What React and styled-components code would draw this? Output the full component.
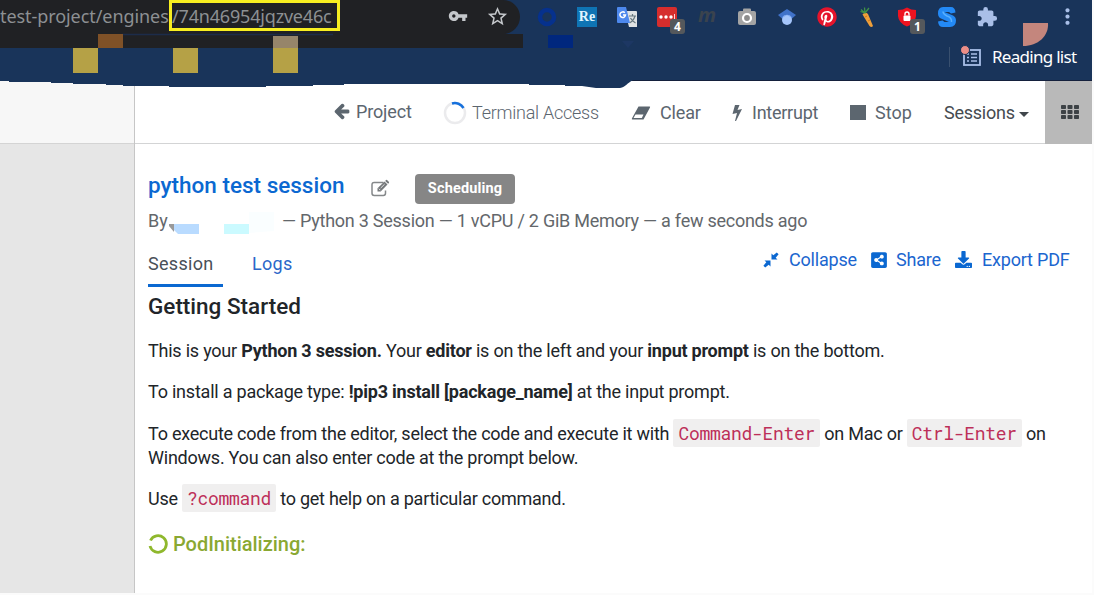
import React from "react";
import styled, { createGlobalStyle } from "styled-components";
import { FaShareAltSquare, FaDownload, FaPinterest } from "react-icons/fa";
import { MdVpnKey, MdStarBorder, MdExtension, MdMoreVert } from "react-icons/md";

const Global = createGlobalStyle`
  * { box-sizing: border-box; }
  html, body { margin: 0; padding: 0; background: #fbfbfb; overflow: hidden; }
  body { font-family: Roboto, "Liberation Sans", sans-serif; font-size: 18px; color: #212529; }
  svg { display: block; flex: none; }
`;

const Window = styled.div`
  width: 1092px;
  height: 593px;
  display: flex;
  flex-direction: column;
  background: #fff;
`;

const Chrome = styled.header`
  position: relative;
  height: 81px;
  flex: none;
  background: #19345a;
  border-bottom: 1px solid #14203c;
`;

const AddressRow = styled.div`
  display: flex;
  height: 34px;
  align-items: flex-start;
`;

const AddressBar = styled.div`
  width: 520px;
  height: 34px;
  margin-right: 7px;
  display: flex;
  background: #202124;
  border-top-right-radius: 17px;
  border-bottom-right-radius: 17px;
  color: #c4c7cb;
`;

const KeyIcon = styled(MdVpnKey)`
  margin-top: 6px;
`;

const StarIcon = styled(MdStarBorder)`
  margin: 5px 0 0 18px;
`;

const Url = styled.div`
  position: relative;
  z-index: 1;
  width: 448px;
  height: 34px;
  display: flex;
  color: #8d9093;
  font: 18px/32px "Noto Sans", "Open Sans", sans-serif;
  white-space: nowrap;
`;

const UrlBase = styled.span`
  width: 169px;
  letter-spacing: -0.07px;
`;

const UrlMark = styled.span`
  width: 171px;
  height: 31px;
  line-height: 26px;
  border: 3px solid #f7ee20;
  letter-spacing: -0.18px;
`;

const Extension = styled.span`
  position: relative;
  width: 40px;
  height: 34px;
  display: flex;
  align-items: center;
  justify-content: center;
  padding-bottom: 1px;
  color: ${(p) => p.$color || "#a9bfe8"};
`;

const Badge = styled.span`
  position: absolute;
  left: 23px;
  top: 19px;
  width: 15px;
  height: 15px;
  border-radius: 3px;
  background: #54585c;
  color: #fff;
  font: bold 12px/15px "Open Sans", sans-serif;
  text-align: center;
`;

const ReTile = styled.span`
  width: 20px;
  height: 20px;
  background: #0f74b4;
  color: #dff5ff;
  font: bold 14px/20px "Liberation Serif", serif;
  text-align: center;
`;

const MLetter = styled.span`
  color: #3a434e;
  font: italic bold 20px/28px "Open Sans", sans-serif;
  padding-bottom: 3px;
`;

const MenuButton = styled.span`
  margin-left: 48px;
  margin-top: 4px;
  color: #a9bfe8;
`;

const ChromeArt = styled.svg`
  position: absolute;
  left: 0;
  top: 0;
  pointer-events: none;
`;

const BookmarkRow = styled.div`
  display: flex;
  align-items: center;
  justify-content: flex-end;
  height: 44px;
  padding: 0 16px 1px 0;
  color: #fff;
  font: 17px/24px "Noto Sans", "Open Sans", sans-serif;
`;

const ReadingList = styled.div`
  display: flex;
  align-items: center;
  width: 127px;
  height: 20px;
  margin-top: 3px;
  border-left: 1px solid #39506f;
  white-space: nowrap;
  svg { margin: -3px 0 0 11px; }
  span { margin-left: 9px; letter-spacing: -0.72px; }
`;

const Body = styled.div`
  display: flex;
  flex: 1;
  min-height: 0;
`;

const Sidebar = styled.aside`
  width: 135px;
  flex: none;
  background: #e6e6e6;
  border-right: 1px solid #c6c6c6;
`;

const SidebarTop = styled.div`
  height: 63px;
  background: #f7f7f7;
  border-bottom: 1px solid #d4d4d4;
`;

const Main = styled.main`
  width: 957px;
  display: flex;
  flex-direction: column;
`;

const Toolbar = styled.nav`
  display: grid;
  grid-template-columns: 109px 188px 100px 118px 95px 101px 47px;
  padding-left: 199px;
  height: 63px;
  flex: none;
  border-bottom: 1px solid #d3d4d5;
  color: #5c666f;
`;

const Tool = styled.div`
  display: flex;
  align-items: center;
  height: 63px;
  padding-bottom: ${(p) => p.$lift || 0}px;
  white-space: nowrap;
  font-weight: ${(p) => p.$weight || 400};
  color: ${(p) => p.$color || "inherit"};
  span { margin-left: ${(p) => p.$gap || 0}px; letter-spacing: ${(p) => p.$track || 0}px; }
`;

const Caret = styled.i`
  margin: 4px 0 0 4px;
  border: 5px solid transparent;
  border-top-color: #40464b;
  border-bottom: 0;
`;

const Apps = styled.div`
  height: 63px;
  display: flex;
  align-items: center;
  justify-content: center;
  padding: 0 0 1px 3px;
  background: #b9b9b9;
`;

const Content = styled.section`
  padding: 28px 24px 0 13px;
`;

const TitleRow = styled.div`
  display: flex;
  height: 34px;
  align-items: center;
  svg { margin-bottom: 3px; }
`;

const Title = styled.h1`
  width: 223px;
  margin: 0;
  font-size: 22.5px;
  line-height: 28px;
  font-weight: 500;
  color: #0b68d1;
  padding-bottom: 8px;
  white-space: nowrap;
`;

const Status = styled.span`
  width: 100px;
  height: 30px;
  margin-left: 25px;
  border-radius: 4px;
  background: #868686;
  color: #fff;
  font-size: 14.5px;
  font-weight: 700;
  line-height: 29px;
  text-align: center;
  letter-spacing: 0.15px;
`;

const Byline = styled.div`
  display: flex;
  height: 30px;
  line-height: 30px;
  color: #63676b;
  white-space: nowrap;
  svg { margin-top: 3px; }
`;

const By = styled.span`
  width: 21px;
`;

const Meta = styled.span`
  letter-spacing: -0.25px;
`;

const TabRow = styled.div`
  display: flex;
  justify-content: space-between;
  height: 51px;
  padding-top: 13px;
`;

const Tabs = styled.div`
  display: flex;
  gap: 29px;
`;

const Tab = styled.a`
  height: 38px;
  width: 75px;
  line-height: 30px;
  letter-spacing: 0.3px;
  color: ${(p) => (p.$active ? "#495057" : "#2a67c9")};
  border-bottom: 3px solid ${(p) => (p.$active ? "#0b68d1" : "transparent")};
`;

const Actions = styled.div`
  display: grid;
  grid-template-columns: 107px 85px 113px;
  height: 21px;
`;

const Action = styled.a`
  display: flex;
  align-items: center;
  color: #1b66cf;
  white-space: nowrap;
  svg { color: #0b68d1; }
  span { margin-left: ${(p) => p.$gap}px; letter-spacing: -0.2px; }
`;

const Heading = styled.h2`
  margin: 5px 0 19px;
  font-size: 22.5px;
  line-height: 28px;
  font-weight: 500;
  color: #212529;
`;

const Text = styled.p`
  margin: 0 0 17.3px;
  line-height: 24px;
  white-space: nowrap;
  letter-spacing: ${(p) => p.$track || -0.25}px;
  b { font-weight: 700; }
`;

const Code = styled.code`
  display: inline-block;
  padding: 2px 5px;
  margin: -4px 0;
  border-radius: 2px;
  background: #f0efef;
  color: #bd2f59;
  font: 18px/24px "Roboto Mono", "DejaVu Sans Mono", monospace;
  letter-spacing: -0.3px;
`;

const Pod = styled.div`
  display: flex;
  align-items: center;
  height: 28px;
  margin-top: 19px;
  color: #8aa832;
  font-size: 20px;
  font-weight: 500;
  span { margin-left: 5px; letter-spacing: -0.02px; }
`;

const PixelArt = () => (
  <ChromeArt width="1092" height="90" viewBox="0 0 1092 90">
    <rect y="34" width="523" height="14" fill="#202124" />
    <path d="M0 28H510L505 34H0Z" fill="#202124" />
    <path d="M122 34.5H333" stroke="#1c2c4a" strokeWidth="1.5" />
    <rect x="98" y="34" width="25" height="14" fill="#7f5127" />
    <rect x="73" y="48" width="25" height="25" fill="#b5a146" />
    <rect x="173" y="48" width="25" height="25" fill="#b5a146" />
    <rect x="273" y="36" width="25" height="12" fill="#96856a" />
    <rect x="273" y="48" width="25" height="25" fill="#b5a146" />
    <rect x="548" y="35" width="25" height="13" fill="#00277e" />
    <path d="M622 41L634 41L628 48Z" fill="#1d3763" />
    <path d="M1023 23H1048C1049 36 1038 46 1023 46Z" fill="#c4867d" />
    <path d="M0 80H633C627 83 626 87 620 88H596L582 86H565V85H529V84H344V85H313V86H266V87H169V86H123V85H106V84H73V83H51V82H9V81H0Z" fill="#19345a" />
  </ChromeArt>
);

const ArrowLeft = () => (
  <svg width="16" height="17" viewBox="0 130 1600 1660" fill="#5c666f">
    <path d="M1536 896v128q0 53-32.5 90.5T1419 1152H715l293 294q38 36 38 90t-38 90l-75 76q-37 37-90 37-52 0-91-37L101 1050Q64 1013 64 960q0-52 37-91l651-650q38-38 91-38 52 0 90 38l75 74q38 38 38 91t-38 91L715 768h704q52 0 84.5 37.5T1536 896z" />
  </svg>
);

const EditIcon = () => (
  <svg width="19" height="18" viewBox="0 0 19 18">
    <path d="M12.500 3.500H3.200Q1 3.500 1 5.700V14.300Q1 16.500 3.200 16.500H12.300Q14.500 16.500 14.500 14.300V11.500" fill="none" stroke="#85888a" strokeWidth="1.500" />
    <path d="M6.500 9.200L13.500 2.500L16.500 5.500L9.700 12.400H6.500Z" fill="#75787b" />
    <path d="M7.800 9.700L9.300 11.200M9.700 9L13.600 5.200" stroke="#fff" strokeWidth="0.800" />
    <path d="M14.200 1.900L15 1.100Q15.700 0.600 16.300 1.200L17.800 2.700Q18.400 3.300 17.900 4L17.100 4.800Z" fill="#75787b" />
  </svg>
);

export default function App() {
  return (
    <>
      <Global />
      <Window>
        <Chrome>
          <PixelArt />
          <AddressRow>
            <AddressBar>
              <Url>
                <UrlBase>test-project/engines</UrlBase>
                <UrlMark>/74n46954jqzve46c</UrlMark>
              </Url>
              <KeyIcon size={20} />
              <StarIcon size={23} />
            </AddressBar>
            <Extension>
              <svg width="20" height="20"><circle cx="10" cy="10" r="7" fill="none" stroke="#06318d" strokeWidth="4.500" /></svg>
            </Extension>
            <Extension><ReTile>Re</ReTile></Extension>
            <Extension>
              <svg width="22" height="22" viewBox="0 0 22 22">
                <path d="M9 5H20a1 1 0 0 1 1 1V21H13Z" fill="#dfe2e4" />
                <path d="M13 10H20M16.500 8V10M19 10Q17.500 15 13.500 17M14.500 12Q16 15 19.500 17" fill="none" stroke="#68787f" strokeWidth="1.200" />
                <path d="M1 2Q1 1 2 1H10L14 17H2Q1 17 1 16Z" fill="#4d88ed" />
                <path d="M8.800 6.800A2.800 2.800 0 1 0 9.500 9H7" fill="none" stroke="#fff" strokeWidth="1.500" />
              </svg>
            </Extension>
            <Extension>
              <svg width="20" height="20"><rect width="20" height="20" rx="2" fill="#d62d2d" /><circle cx="4" cy="10" r="1.700" fill="#fff" /><circle cx="9" cy="10" r="1.700" fill="#fff" /><circle cx="14" cy="10" r="1.700" fill="#fff" /><path d="M17.500 7V12" stroke="#ffd4d4" /></svg>
              <Badge>4</Badge>
            </Extension>
            <Extension><MLetter>m</MLetter></Extension>
            <Extension>
              <svg width="20" height="18" viewBox="0 0 20 18"><rect x="1" y="3" width="18" height="14" rx="2" fill="#a4a4a4" /><rect x="6" y="0.500" width="8" height="4" rx="1" fill="#a4a4a4" /><circle cx="10" cy="10" r="4" fill="#8c8c8c" stroke="#fff" strokeWidth="2.200" /></svg>
            </Extension>
            <Extension>
              <svg width="20" height="18" viewBox="0 0 20 18"><path d="M1 7L10 1L19 7L14.500 11H5.500Z" fill="#4072c9" /><circle cx="10" cy="12" r="5" fill="#a5c5fb" /><path d="M5 10A5.500 5.500 0 0 1 15 10L10 7Z" fill="#7da9f3" /></svg>
            </Extension>
            <Extension $color="#e6142b">
              <svg width="20" height="20" viewBox="0 0 20 20"><circle cx="10" cy="10" r="9" fill="#fff" /><FaPinterest size={20} /></svg>
            </Extension>
            <Extension>
              <svg width="16" height="22" viewBox="0 0 16 22"><path d="M3.500 8.500Q6 5.500 9 8L14 20Q12.500 22 10.500 20Z" fill="#ef9f3a" /><path d="M6 7L2 3.500M6 7L5.500 1.500M6 7L10 2M6 7L1.500 5.500" stroke="#3f9147" strokeWidth="1.300" /><path d="M8 10L6 11M11 14L9 15" stroke="#d27a18" /></svg>
            </Extension>
            <Extension>
              <svg width="18" height="20" viewBox="0 0 18 20"><path d="M9 0.500Q13 3 18 3V9Q17.500 16 9 19.500Q0.500 16 0 9V3Q5 3 9 0.500Z" fill="#ee1320" /><rect x="5.500" y="8.500" width="7" height="5.500" rx="1" fill="#fff" /><path d="M7 8.500V7A2 2 0 0 1 11 7V8.500" fill="none" stroke="#fff" strokeWidth="1.400" /></svg>
              <Badge>1</Badge>
            </Extension>
            <Extension>
              <svg width="20" height="22" viewBox="0 0 20 22">
                <path d="M6 1H14Q18 1 18.500 6.500L14 7.500L12 6H7.500L16 9.500Q19 11 19 14.500Q19 21 13 21H6Q1.500 21 1 15.500L5.500 14.500L7.500 16H12L4 12.500Q1 11 1 7.500Q1 1 6 1Z" fill="#2389f5" />
                <path d="M6 5.500Q6 8 10 10Q15 11.500 14.500 16" fill="none" stroke="#58b0ff" strokeWidth="1.500" />
              </svg>
            </Extension>
            <Extension><MdExtension size={22} /></Extension>
            <MenuButton><MdMoreVert size={25} /></MenuButton>
          </AddressRow>
          <BookmarkRow>
            <ReadingList>
              <svg width="22" height="24" viewBox="0 0 22 24">
                <rect x="3" y="6" width="16" height="15" fill="none" stroke="#a9bfe8" strokeWidth="1.800" />
                <path d="M6 10H8M10 10H16M6 13.500H8M10 13.500H16M6 17H8M10 17H16" stroke="#a9bfe8" strokeWidth="1.600" />
                <circle cx="4" cy="6" r="4.500" fill="#ec8e87" stroke="#19345a" />
              </svg>
              <span>Reading list</span>
            </ReadingList>
          </BookmarkRow>
        </Chrome>
        <Body>
          <Sidebar><SidebarTop /></Sidebar>
          <Main>
            <Toolbar>
              <Tool $gap={6} $lift={2} $track={-0.15}><ArrowLeft /><span>Project</span></Tool>
              <Tool $gap={5} $weight={300} $track={-0.25}>
                <svg width="24" height="24"><circle cx="12" cy="12" r="10" fill="none" stroke="#ebebed" strokeWidth="2.500" /><path d="M9 2.500A10 10 0 0 1 20.500 7" fill="none" stroke="#1670dc" strokeWidth="2.500" /></svg>
                <span>Terminal Access</span>
              </Tool>
              <Tool $gap={9} $track={-0.15}>
                <svg width="20" height="14" viewBox="0 0 20 14"><path d="M7.500 0.500H18.500Q19.500 0.500 19 1.500L12.500 13.500H1.500Q0.300 13.500 1 12.300Z" fill="#5c666f" /><path d="M4.500 8.500H12.500L10.800 12H2.500Z" fill="#fff" /></svg>
                <span>Clear</span>
              </Tool>
              <Tool $gap={9} $track={-0.25}>
                <svg width="12" height="18" viewBox="0 0 12 18"><path d="M4 1H8.500L6.500 6L11 5L5 17H4L6 9L1.500 10Z" fill="#5c666f" /></svg>
                <span>Interrupt</span>
              </Tool>
              <Tool $gap={9}><svg width="17" height="17"><rect x="1" y="1" width="16" height="15" fill="#5c666f" /></svg><span>Stop</span></Tool>
              <Tool $color="#454b50" $track={-0.25}><span>Sessions</span><Caret /></Tool>
              <Apps>
                <svg width="18" height="15" viewBox="0 0 18 15" fill="#3d4246">
                  {[0, 5, 10].map((y) => [0, 6.5, 13].map((x) => <rect key={`${x}-${y}`} x={x} y={y} width="5" height="4" rx="0.8" />))}
                </svg>
              </Apps>
            </Toolbar>
            <Content>
              <TitleRow>
                <Title>python test session</Title>
                <EditIcon />
                <Status>Scheduling</Status>
              </TitleRow>
              <Byline>
                <By>By</By>
                <svg width="113" height="26"><path d="M0 15H5V23L0 17Z" fill="#999" /><path d="M5 15H30V25H9L5 21Z" fill="#b9dbff" /><rect x="55" y="15" width="25" height="10" fill="#cbfaff" /><path d="M80 3H105V22L80 24Z" fill="#fafeff" /></svg>
                <Meta>— Python 3 Session — 1 vCPU / 2 GiB Memory — a few seconds ago</Meta>
              </Byline>
              <TabRow>
                <Tabs><Tab $active>Session</Tab><Tab>Logs</Tab></Tabs>
                <Actions>
                  <Action $gap={10}>
                    <svg width="16" height="16" viewBox="0 0 16 16" fill="#0b68d1"><path d="M8.500 1.500L10.300 3.300L13.800 0.400L15.600 2.200L12.700 5.700L14.500 7.500H8.500ZM7.500 14.500L5.700 12.700L2.200 15.600L0.400 13.800L3.300 10.300L1.500 8.500H7.500Z" /></svg>
                    <span>Collapse</span>
                  </Action>
                  <Action $gap={8}><FaShareAltSquare size={18} /><span>Share</span></Action>
                  <Action $gap={10}><FaDownload size={17} /><span>Export PDF</span></Action>
                </Actions>
              </TabRow>
              <Heading>Getting Started</Heading>
              <Text $track={-0.22}>This is your <b>Python 3 session.</b> Your <b>editor</b> is on the left and your <b>input prompt</b> is on the bottom.</Text>
              <Text $track={-0.22}>To install a package type: <b>!pip3 install [package_name]</b> at the input prompt.</Text>
              <Text $track={-0.235}>To execute code from the editor, select the code and execute it with <Code>Command-Enter</Code> on Mac or <Code>Ctrl-Enter</Code> on<br />Windows. You can also enter code at the prompt below.</Text>
              <Text>Use <Code>?command</Code> to get help on a particular command.</Text>
              <Pod>
                <svg width="20" height="20"><path d="M2.500 6.500A8.300 8.300 0 1 1 2 12" fill="none" stroke="#8fb82d" strokeWidth="2.800" /></svg>
                <span>PodInitializing:</span>
              </Pod>
            </Content>
          </Main>
        </Body>
      </Window>
    </>
  );
}
